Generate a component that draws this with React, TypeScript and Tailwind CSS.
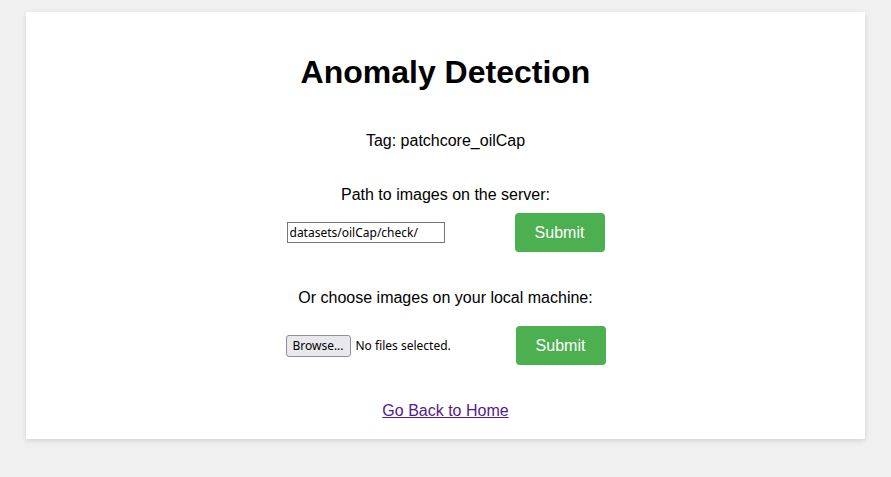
export default function App() {
  return (
    <div className="min-h-[477px] bg-[#f0f0f0] pt-[12px] px-[26px]" style={{ fontFamily: '"Liberation Sans", Arial, sans-serif' }}>
      <div className="bg-white shadow-[0_2px_5px_rgba(0,0,0,0.12)] pt-[20px] pb-[19px] flex flex-col items-center text-black">
        <h1 className="mt-[22px] text-[32px] leading-[37px] font-bold">Anomaly Detection</h1>
        <p className="mt-[41px] text-[16px] leading-[18px]">Tag: patchcore_oilCap</p>
        <p className="mt-[36px] text-[16px] leading-[18px]">Path to images on the server:</p>
        <div className="mt-[9px] w-[318px] flex items-center justify-between">
          <input
            type="text"
            defaultValue="datasets/oilCap/check/"
            className="w-[158px] h-[21px] border border-[#767676] px-[2px] text-[12px] text-black outline-none"
            style={{ fontFamily: '"Noto Sans", "DejaVu Sans", sans-serif' }}
          />
          <button className="w-[90px] h-[39px] rounded-[4px] bg-[#4CAF50] text-white text-[16px]">Submit</button>
        </div>
        <p className="mt-[37px] text-[16px] leading-[18px]">Or choose images on your local machine:</p>
        <div className="mt-[19px] w-[320px] flex items-center justify-between">
          <div className="flex items-center" style={{ fontFamily: '"Noto Sans", "DejaVu Sans", sans-serif' }}>
            <span className="h-[22px] w-[65px] flex items-center justify-center border border-[#8f8f9d] rounded-[3px] bg-[#e9e9ed] text-[12px] text-black">Browse...</span>
            <span className="ml-[5px] text-[12px] text-black">No files selected.</span>
          </div>
          <button className="w-[90px] h-[39px] rounded-[4px] bg-[#4CAF50] text-white text-[16px]">Submit</button>
        </div>
        <a href="#" className="mt-[37px] text-[16px] leading-[18px] text-[#551A8B] underline">Go Back to Home</a>
      </div>
    </div>
  );
}
